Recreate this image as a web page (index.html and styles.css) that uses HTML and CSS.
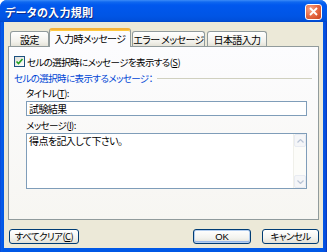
FILE: index.html
```html
<!DOCTYPE html>
<html lang="ja">
<head>
    <meta charset="UTF-8">
    <title>データの入力規則</title>
    <link rel="stylesheet" href="styles.css">
</head>
<body>
    <div class="window">
        <div class="titlebar">
            <span class="title">データの入力規則</span>
            <span class="close">
                <svg width="9" height="9" viewBox="0 0 9 9"><path d="M1 1 L8 8 M8 1 L1 8" stroke="#fff" stroke-width="1.8" fill="none"/></svg>
            </span>
        </div>

        <div class="client">
            <div class="tabs">
                <div class="tab tab-1">設定</div>
                <div class="tab tab-2 active">入力時メッセージ</div>
                <div class="tab tab-3">エラー メッセージ</div>
                <div class="tab tab-4">日本語入力</div>
            </div>

            <div class="panel">
                <div class="check-row">
                    <span class="checkbox">
                        <svg width="9" height="9" viewBox="0 0 9 9"><path d="M1.5 4.5 L3.5 6.5 L7.5 2" stroke="#21a121" stroke-width="1.6" fill="none"/></svg>
                    </span>
                    <span>セルの選択時にメッセージを表示する(<u>S</u>)</span>
                </div>

                <div class="group">
                    <span class="group-label">セルの選択時に表示するメッセージ：</span>
                    <span class="group-rule"></span>
                </div>

                <div class="field">
                    <div class="field-label">タイトル(<u>T</u>):</div>
                    <div class="input">試験結果</div>
                </div>

                <div class="field">
                    <div class="field-label">メッセージ(<u>I</u>):</div>
                    <div class="textarea">
                        <div class="textarea-text">得点を記入して下さい。</div>
                        <div class="scrollbar">
                            <span class="arrow">
                                <svg width="7" height="4" viewBox="0 0 7 4"><path d="M0.5 3.5 L3.5 0.5 L6.5 3.5" stroke="#b9c4d6" stroke-width="1.2" fill="none"/></svg>
                            </span>
                            <span class="track"></span>
                            <span class="arrow">
                                <svg width="7" height="4" viewBox="0 0 7 4"><path d="M0.5 0.5 L3.5 3.5 L6.5 0.5" stroke="#b9c4d6" stroke-width="1.2" fill="none"/></svg>
                            </span>
                        </div>
                    </div>
                </div>
            </div>

            <div class="buttons">
                <button class="btn btn-clear">すべてクリア(<u>C</u>)</button>
                <span class="spacer"></span>
                <button class="btn btn-ok">OK</button>
                <button class="btn btn-cancel">キャンセル</button>
            </div>
        </div>
    </div>
</body>
</html>
```

FILE: styles.css
```css
/* Reset */
* {
    margin: 0;
    padding: 0;
    box-sizing: border-box;
}

body {
    font-family: "Noto Sans CJK JP", "Liberation Sans", sans-serif;
    font-size: 9.5px;
    letter-spacing: -0.6px;
    font-feature-settings: "palt";
    color: #000;
    background: #fff;
}

u {
    text-decoration: underline;
    text-underline-offset: 1px;
}

/* Window frame */
.window {
    width: 327px;
    height: 252px;
    display: flex;
    flex-direction: column;
    background: linear-gradient(90deg, #0840d0 0, #0a5ce8 1px, #0058e6 3px, #0058e6 323px, #0a49d8 326px, #0030b0 327px);
    border-radius: 7px 7px 0 0;
    overflow: hidden;
}

.titlebar {
    height: 22px;
    display: flex;
    align-items: center;
    padding: 0 5px 0 5px;
    background: linear-gradient(#3c8cf7 0, #0f68f0 2px, #0058ee 5px, #0055e5 16px, #0050dc 20px, #0047c8 22px);
}

.title {
    flex: 1;
    color: #fff;
    font-weight: bold;
    font-size: 11px;
    letter-spacing: 0.3px;
    text-shadow: 1px 1px 0 #0a2a8c;
    padding-top: 1px;
}

.close {
    width: 17px;
    height: 16px;
    display: flex;
    align-items: center;
    justify-content: center;
    border: 1px solid #fff;
    border-radius: 3px;
    background: radial-gradient(circle at 30% 30%, #f7a58b 0, #e86d48 45%, #c8401c 100%);
    margin-top: 1px;
}

/* Client area */
.client {
    flex: 1;
    margin: 0 4px 4px 4px;
    background: #ece9d8;
    display: flex;
    flex-direction: column;
    padding: 6px 4px 0 4px;
}

/* Tabs */
.tabs {
    display: flex;
    align-items: flex-end;
    height: 18px;
    padding-left: 2px;
    position: relative;
    z-index: 2;
}

.tab {
    height: 15px;
    border: 1px solid #919b9c;
    border-bottom: none;
    border-radius: 3px 3px 0 0;
    background: linear-gradient(#fff, #f2f1eb 70%, #e4e2d8);
    display: flex;
    align-items: center;
    justify-content: center;
    white-space: nowrap;
    font-size: 10px;
}

.tab-1 { width: 39px; }
.tab-2 { width: 82px; }
.tab-3 { width: 73px; margin-left: 1px; }
.tab-4 { width: 60px; margin-left: 2px; }

.tab.active {
    height: 19px;
    margin-bottom: -1px;
    background: #fcfcfe;
    border-top: 2px solid #f5b33a;
    box-shadow: inset 0 1px 0 #ffc83c;
    padding-bottom: 1px;
}

/* Tab panel */
.panel {
    height: 174px;
    border: 1px solid #919b9c;
    background: linear-gradient(#fcfcfe, #f7f6f2);
    padding: 9px 0 0 5px;
}

.check-row {
    display: flex;
    align-items: center;
    height: 11px;
}

.checkbox {
    width: 11px;
    height: 11px;
    border: 1px solid #1c5180;
    background: linear-gradient(135deg, #dcdcd7, #fff);
    display: flex;
    align-items: center;
    justify-content: center;
    margin-right: 2px;
}

.group {
    display: flex;
    align-items: center;
    margin-top: 5px;
    height: 12px;
}

.group-label {
    color: #0046d5;
    white-space: nowrap;
}

.group-rule {
    flex: 1;
    height: 1px;
    background: #d0d0bf;
    margin: 1px 6px 0 4px;
}

.field {
    padding-left: 12px;
}

.field-label {
    height: 12px;
    line-height: 12px;
    margin-top: 3px;
}

.input {
    width: 281px;
    height: 15px;
    margin-top: 2px;
    border: 1px solid #7f9db9;
    background: #fff;
    padding-left: 2px;
    line-height: 13px;
    font-size: 10px;
}

.textarea {
    width: 281px;
    height: 56px;
    margin-top: 2px;
    border: 1px solid #7f9db9;
    background: #fff;
    display: flex;
}

.textarea-text {
    flex: 1;
    padding: 1px 2px;
    line-height: 12px;
    font-size: 10px;
}

.scrollbar {
    width: 13px;
    display: flex;
    flex-direction: column;
    background: #fcfcf9;
    border-left: 1px solid #f0f0ea;
}

.scrollbar .arrow {
    height: 13px;
    display: flex;
    align-items: center;
    justify-content: center;
    border: 1px solid #e8ebf2;
    border-radius: 2px;
    background: #f5f6f8;
}

.scrollbar .track {
    flex: 1;
}

/* Bottom buttons */
.buttons {
    display: flex;
    margin-top: 9px;
    gap: 11px;
}

.spacer {
    flex: 1;
}

.btn {
    height: 15px;
    font-family: inherit;
    font-size: 9.5px;
    letter-spacing: -0.6px;
    font-feature-settings: "palt";
    border: 1px solid #003c74;
    border-radius: 3px;
    background: linear-gradient(#fff, #f3f3ef 60%, #e2e0d6);
    color: #000;
    display: flex;
    align-items: center;
    justify-content: center;
    line-height: 1;
}

.btn-clear {
    width: 70px;
    margin-left: 1px;
}

.btn-ok {
    width: 58px;
    box-shadow: inset 0 0 0 1px #b4ceef, inset 0 -1px 0 1px #98b8ea;
    font-family: "Liberation Sans", sans-serif;
    letter-spacing: 0;
}

.btn-cancel {
    width: 57px;
}
```
